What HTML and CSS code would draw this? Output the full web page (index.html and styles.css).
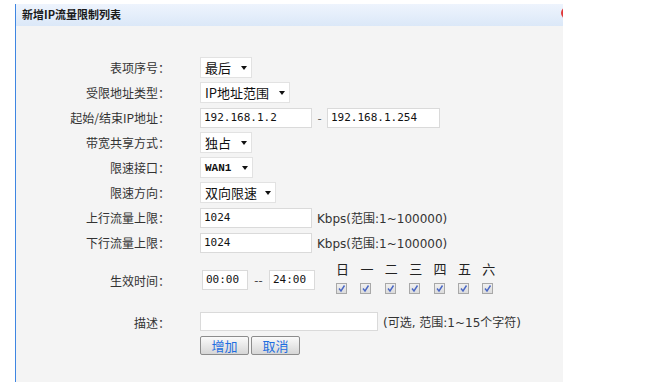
FILE: index.html
```html
<!DOCTYPE html>
<html lang="zh-CN">
<head>
  <meta charset="UTF-8" />
  <title>新增IP流量限制列表</title>
  <link rel="stylesheet" href="styles.css">
</head>
<body>
  <div class="panel">
    <div class="panel-head">
      新增IP流量限制列表
      <span class="close-btn"></span>
    </div>

    <div class="form">
      <div class="label">表项序号：</div>
      <div class="field"><span class="select w52">最后<i class="arrow"></i></span></div>

      <div class="label">受限地址类型：</div>
      <div class="field"><span class="select w90">IP地址范围<i class="arrow"></i></span></div>

      <div class="label">起始/结束IP地址：</div>
      <div class="field">
        <span class="input w112">192.168.1.2</span>
        <span class="dash">-</span>
        <span class="input w113">192.168.1.254</span>
      </div>

      <div class="label">带宽共享方式：</div>
      <div class="field"><span class="select w52">独占<i class="arrow"></i></span></div>

      <div class="label">限速接口：</div>
      <div class="field"><span class="select w53 mono">WAN1<i class="arrow"></i></span></div>

      <div class="label">限速方向：</div>
      <div class="field"><span class="select w76">双向限速<i class="arrow"></i></span></div>

      <div class="label">上行流量上限：</div>
      <div class="field">
        <span class="input w112">1024</span>
        <span class="hint">Kbps(范围:1~100000)</span>
      </div>

      <div class="label">下行流量上限：</div>
      <div class="field">
        <span class="input w112">1024</span>
        <span class="hint">Kbps(范围:1~100000)</span>
      </div>

      <div class="label time-label">生效时间：</div>
      <div class="field time-field">
        <span class="input time">00:00</span>
        <span class="dash2">--</span>
        <span class="input time">24:00</span>
        <div class="days">
          <span class="day">日</span><span class="day">一</span><span class="day">二</span><span class="day">三</span><span class="day">四</span><span class="day">五</span><span class="day">六</span>
          <span class="check"><svg width="11" height="11" viewBox="0 0 11 11"><path d="M3 5.5 L5 8 L8.5 2.5" fill="none" stroke="#4a67c4" stroke-width="1.4"/></svg></span>
          <span class="check"><svg width="11" height="11" viewBox="0 0 11 11"><path d="M3 5.5 L5 8 L8.5 2.5" fill="none" stroke="#4a67c4" stroke-width="1.4"/></svg></span>
          <span class="check"><svg width="11" height="11" viewBox="0 0 11 11"><path d="M3 5.5 L5 8 L8.5 2.5" fill="none" stroke="#4a67c4" stroke-width="1.4"/></svg></span>
          <span class="check"><svg width="11" height="11" viewBox="0 0 11 11"><path d="M3 5.5 L5 8 L8.5 2.5" fill="none" stroke="#4a67c4" stroke-width="1.4"/></svg></span>
          <span class="check"><svg width="11" height="11" viewBox="0 0 11 11"><path d="M3 5.5 L5 8 L8.5 2.5" fill="none" stroke="#4a67c4" stroke-width="1.4"/></svg></span>
          <span class="check"><svg width="11" height="11" viewBox="0 0 11 11"><path d="M3 5.5 L5 8 L8.5 2.5" fill="none" stroke="#4a67c4" stroke-width="1.4"/></svg></span>
          <span class="check"><svg width="11" height="11" viewBox="0 0 11 11"><path d="M3 5.5 L5 8 L8.5 2.5" fill="none" stroke="#4a67c4" stroke-width="1.4"/></svg></span>
        </div>
      </div>

      <div class="label desc-label">描述：</div>
      <div class="field desc-field">
        <span class="input w178"></span>
        <span class="hint">(可选, 范围:1~15个字符)</span>
      </div>

      <div class="label"></div>
      <div class="field buttons">
        <button class="btn">增加</button>
        <button class="btn">取消</button>
      </div>
    </div>
  </div>
</body>
</html>
```

FILE: styles.css
```css
* { box-sizing: border-box; }
body {
  margin: 0;
  background: #fff;
  font-family: "Noto Sans CJK SC", "DejaVu Sans", sans-serif;
  color: #333;
}
.panel {
  margin: 4px 0 0 15px;
  width: 548px;
  height: 378px;
  border-left: 1px solid #3f86e2;
  background: #f4f4f4;
  overflow: hidden;
}
.panel-head {
  position: relative;
  height: 22px;
  line-height: 21px;
  padding-left: 6px;
  font-size: 11px;
  font-weight: bold;
  color: #1a1a1a;
  background: linear-gradient(#eef4fd, #dbe8f8);
}
.close-btn {
  position: absolute;
  right: -10px; top: 3px;
  width: 12px; height: 12px;
  border-radius: 50%;
  background: #e0383a;
}
.form {
  display: grid;
  grid-template-columns: 154px 1fr;
  grid-template-rows: repeat(8, 21px) 45px 25px 20px;
  column-gap: 30px;
  row-gap: 4px;
  padding-top: 31px;
}
.label {
  text-align: right;
  font-size: 12px;
  line-height: 21px;
  color: #333;
}
.field { display: flex; align-items: center; }
.select {
  display: inline-flex; align-items: center;
  height: 21px;
  padding: 0 4px;
  background: #fff;
  border: 1px solid #e2e2e2;
  font-size: 13px;
  color: #111;
}
.select.mono { font-family: "Liberation Mono", monospace; font-size: 11px; font-weight: bold; }
.arrow {
  margin-left: auto;
  border-left: 3.5px solid transparent;
  border-right: 3.5px solid transparent;
  border-top: 4px solid #111;
}
.w52 { width: 52px; }
.w53 { width: 53px; }
.w76 { width: 76px; }
.w90 { width: 90px; }
.w112 { width: 112px; }
.w113 { width: 113px; }
.w178 { width: 178px; }
.input {
  display: inline-block;
  height: 20px;
  line-height: 18px;
  padding: 0 3px;
  background: #fff;
  border: 1px solid #dadada;
  font-family: "DejaVu Sans Mono", monospace;
  font-size: 11px;
  white-space: nowrap;
  color: #111;
}
.dash { width: 15px; text-align: center; font-size: 12px; color: #555; }
.hint {
  margin-left: 5px;
  font-family: "DejaVu Sans", "Noto Sans CJK SC", sans-serif;
  font-size: 12px;
  white-space: nowrap;
  color: #333;
}
.time-label { line-height: 47px; }
.time-field { padding-left: 2px; }
.input.time { width: 46px; height: 20px; }
.dash2 { width: 21px; text-align: center; font-size: 12px; color: #333; }
.days {
  display: grid;
  grid-template-columns: repeat(7, 24.4px);
  row-gap: 5px;
  margin-left: 21px;
  align-self: flex-start;
  padding-top: 3px;
}
.day { font-size: 13px; line-height: 18px; color: #222; }
.check {
  width: 11px; height: 11px;
  border: 1px solid #a8a8a8;
  background: linear-gradient(#f0f0f0, #dcdcdc);
  display: flex;
}
.check svg { margin: -1px; }
.desc-label { line-height: 33px; }
.desc-field { align-items: flex-end; }
.desc-field .input { height: 19px; }
.desc-field .hint { line-height: 16px; }
.buttons { gap: 2px; align-items: flex-end; }
.btn {
  width: 49px; height: 19px;
  padding: 0;
  border: 1px solid #8c8c8c;
  border-radius: 2px;
  background: linear-gradient(#fafafa, #d6d6d6);
  font-family: "Noto Sans CJK SC", sans-serif;
  font-size: 13px;
  line-height: 16px;
  color: #1e6ee0;
}
```
